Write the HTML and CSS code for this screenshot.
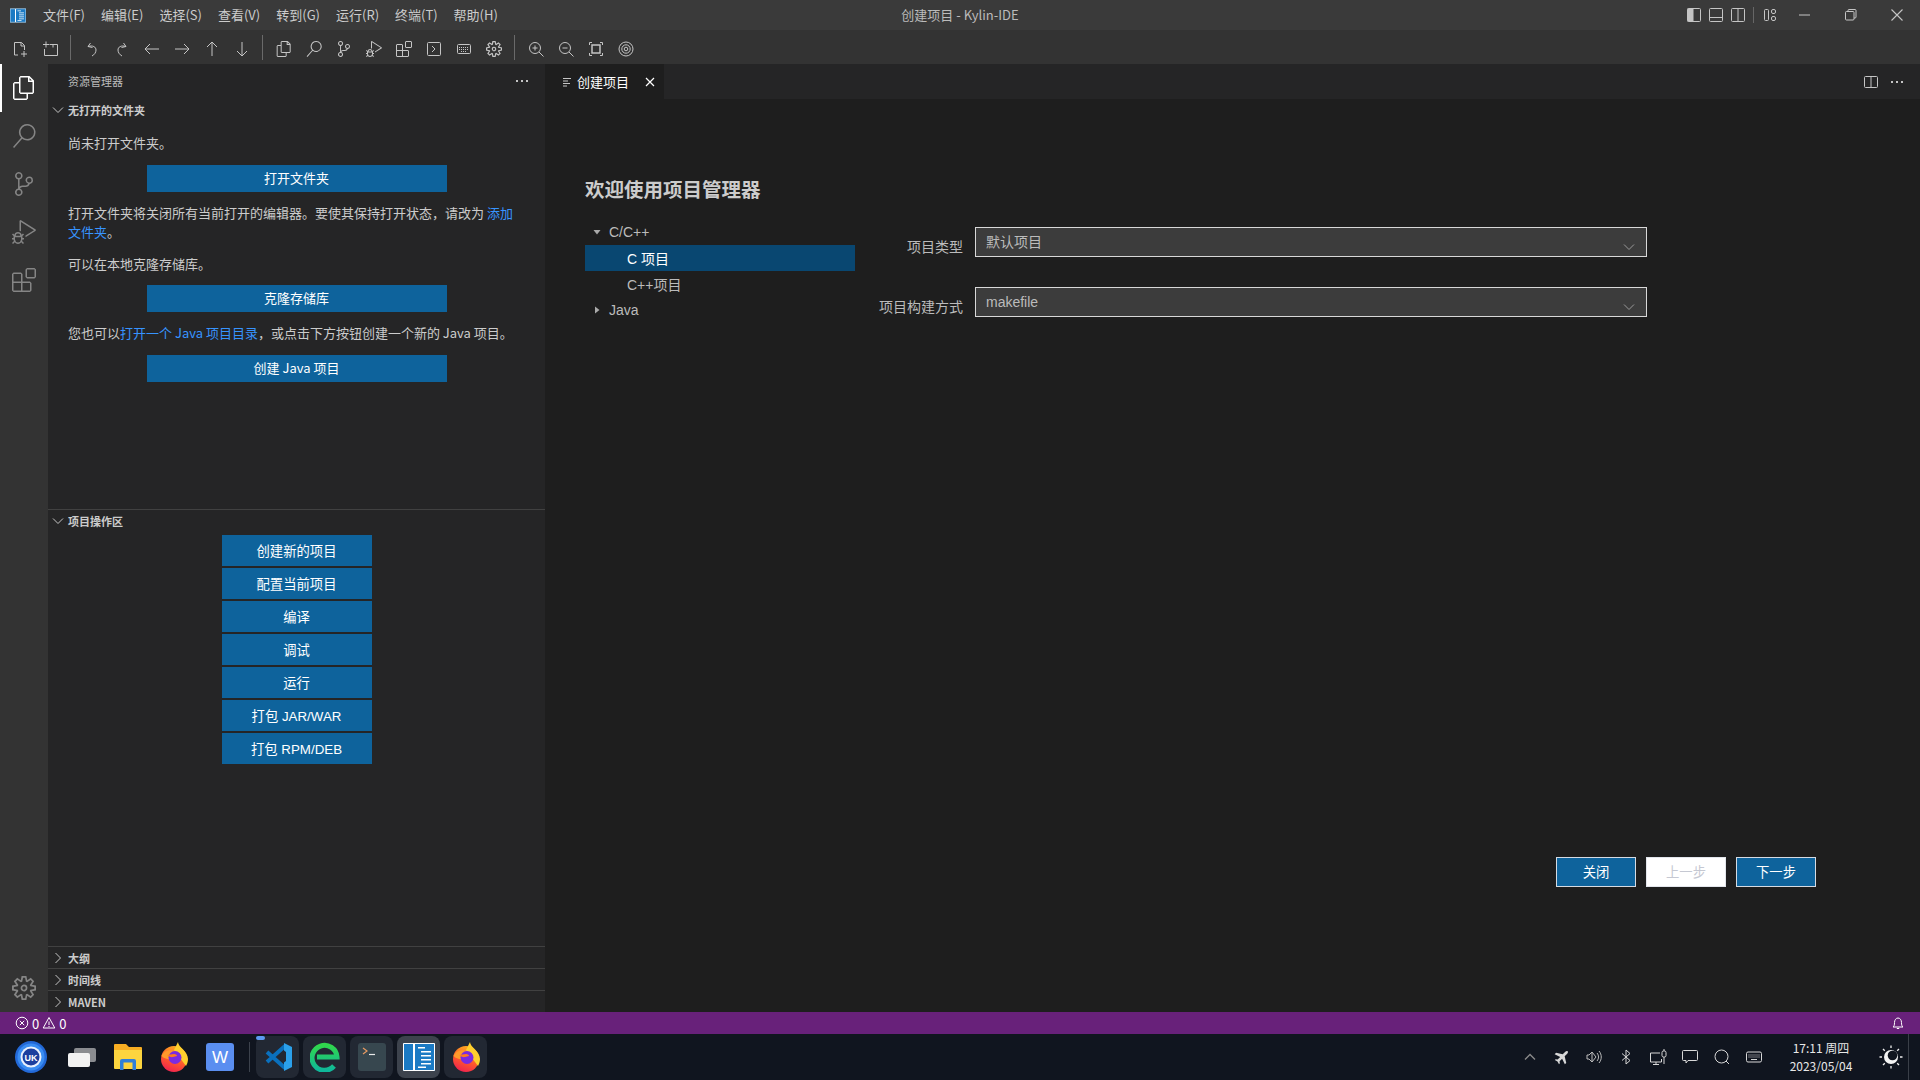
FILE: index.html
```html
<!DOCTYPE html>
<html lang="zh-CN">
<head>
<meta charset="utf-8">
<title>创建项目 - Kylin-IDE</title>
<link rel="stylesheet" href="styles.css">
</head>
<body>
<svg class="defs" aria-hidden="true">
  <defs>
    <linearGradient id="ffg" x1="0.7" y1="0" x2="0.3" y2="1"><stop offset="0" stop-color="#ffb21f"/><stop offset="0.55" stop-color="#ff5a2c"/><stop offset="1" stop-color="#f0204f"/></linearGradient>
    <symbol id="i-files" viewBox="0 0 24 24"><path fill="currentColor" fill-rule="evenodd" d="M17.5 0h-9L7 1.5V6H2.5L1 7.5v15.07L2.5 24h12.07L16 22.57V18h4.7l1.3-1.43V4.5L17.5 0zm0 2.12l2.38 2.38H17.5V2.12zm-3 20.38h-12v-15H7v9.07L8.5 18h6v4.5zm6-6h-12v-15H16V6h4.5v10.5z"/></symbol>
    <symbol id="i-search" viewBox="0 0 24 24"><path fill="currentColor" fill-rule="evenodd" d="M15.25 0a8.25 8.25 0 0 0-6.18 13.72L1 22.88l1.12 1 8.05-9.12A8.251 8.251 0 1 0 15.25.01V0zm0 15a6.75 6.75 0 1 1 0-13.5 6.75 6.75 0 0 1 0 13.5z"/></symbol>
    <symbol id="i-git" viewBox="0 0 24 24"><path fill="currentColor" fill-rule="evenodd" d="M21.007 8.222A3.738 3.738 0 0 0 15.045 5.2a3.737 3.737 0 0 0 1.156 6.583 2.988 2.988 0 0 1-2.668 1.67h-2.99a4.456 4.456 0 0 0-2.989 1.165V7.4a3.737 3.737 0 1 0-1.494 0v9.117a3.776 3.776 0 1 0 1.816.099 2.99 2.99 0 0 1 2.668-1.667h2.99a4.484 4.484 0 0 0 4.223-3.039 3.736 3.736 0 0 0 3.25-3.687zM4.565 3.738a2.242 2.242 0 1 1 4.484 0 2.242 2.242 0 0 1-4.484 0zm4.484 16.441a2.242 2.242 0 1 1-4.484 0 2.242 2.242 0 0 1 4.484 0zm8.221-9.715a2.242 2.242 0 1 1 0-4.485 2.242 2.242 0 0 1 0 4.485z"/></symbol>
    <symbol id="i-debug" viewBox="0 0 24 24"><path fill="currentColor" fill-rule="evenodd" d="M10.94 13.5l-1.32 1.32a3.73 3.73 0 0 0-7.24 0L1.06 13.5 0 14.56l1.72 1.72-.22.22V18H0v1.5h1.5v.08c.077.489.214.966.41 1.42L0 22.94 1.06 24l1.65-1.65A4.308 4.308 0 0 0 6 24a4.31 4.31 0 0 0 3.29-1.65L10.94 24 12 22.94 10.09 21c.198-.464.336-.951.41-1.45v-.1H12V18h-1.5v-1.5l-.22-.22L12 14.56l-1.06-1.06zM6 13.5a2.25 2.25 0 0 1 2.25 2.25h-4.5A2.25 2.25 0 0 1 6 13.5zm3 6a3.33 3.33 0 0 1-3 3 3.33 3.33 0 0 1-3-3v-2.25h6v2.25zm14.76-9.9v1.26L13.5 17.37V15.6l8.5-5.37L9 2v9.46a5.07 5.07 0 0 0-1.5-.72V.63L8.64 0l15.12 9.6z"/></symbol>
    <symbol id="i-ext" viewBox="0 0 24 24"><path fill="currentColor" fill-rule="evenodd" d="M13.5 1.5L15 0h7.5L24 1.5V9l-1.5 1.5H15L13.5 9V1.5zm1.5 0V9h7.5V1.5H15zM0 15V6l1.5-1.5H9L10.5 6v7.5H18l1.5 1.5v7.5L18 24H1.5L0 22.5V15zm9-1.5V6H1.5v7.5H9zM9 15H1.5v7.5H9V15zm1.5 7.5H18V15h-7.5v7.5z"/></symbol>
    <symbol id="i-gear" viewBox="0 0 24 24"><path fill="currentColor" fill-rule="evenodd" d="M19.85 8.75l4.15.83v4.84l-4.15.83 2.35 3.52-3.43 3.43-3.52-2.35-.83 4.15H9.58l-.83-4.15-3.52 2.35-3.43-3.43 2.35-3.52L0 14.42V9.58l4.15-.83L1.8 5.23 5.23 1.8l3.52 2.35L9.58 0h4.84l.83 4.15 3.52-2.35 3.43 3.43-2.35 3.52zm-1.57 5.07l4-.81v-2l-4-.81-.54-1.3 2.29-3.43-1.43-1.43-3.43 2.29-1.3-.54-.81-4h-2l-.81 4-1.3.54-3.43-2.29-1.43 1.43L6.38 8.9l-.54 1.3-4 .81v2l4 .81.54 1.3-2.29 3.43 1.43 1.43 3.43-2.29 1.3.54.81 4h2l.81-4 1.3-.54 3.43 2.29 1.43-1.43-2.29-3.43.54-1.3zm-8.186-4.672A3.43 3.43 0 0 1 12 8.57 3.44 3.44 0 0 1 15.43 12a3.43 3.43 0 1 1-5.336-2.852zm.956 4.274c.281.188.612.288.95.288A1.7 1.7 0 0 0 13.71 12a1.71 1.71 0 1 0-2.66 1.422z"/></symbol>
    <symbol id="i-chev-down" viewBox="0 0 16 16"><path fill="none" stroke="currentColor" d="M3 5.500l5 5 5-5"/></symbol>
    <symbol id="i-chev-right" viewBox="0 0 16 16"><path fill="none" stroke="currentColor" d="M5.500 3l5 5-5 5"/></symbol>
    <symbol id="i-dots" viewBox="0 0 16 16"><path fill="currentColor" d="M2 7h2v2H2zM7 7h2v2H7zM12 7h2v2h-2z"/></symbol>
    <symbol id="i-kylin" viewBox="0 0 32 28">
      <rect width="32" height="28" fill="#1b7ac4"/>
      <path fill="none" stroke="#fff" d="M.5.5h31v27H.5z"/>
      <path fill="#fff" d="M10 1h2v26h-2zM15 4h7v1.600h-7zM18 8h10v1.600H18zM18 12h10v1.600H18zM18 16h10v1.600H18zM18 20h10v1.600H18zM15 23.500h8V25h-8z"/>
    </symbol>
    <symbol id="i-firefox" viewBox="0 0 28 30">
      <circle cx="14" cy="17" r="13" fill="url(#ffg)"/>
      <path fill="#ffcf2e" d="M18 0c0 5 10 9 10 17 0 3-1 5-2 7L14 8z"/>
      <path fill="#ff9a2b" d="M1.500 14c2-6 11-8 16-3l3 4-6 2c-5 1-10 0-13-3z"/>
      <circle cx="15" cy="15.500" r="6.500" fill="#7a2be0"/>
      <path fill="#ff7a1f" d="M7 13l7-1c2 0 3 1 3 2l-4 1c-2 .5-4-.5-6-2z"/>
    </symbol>
  </defs>
</svg>

<div class="app">
  <header class="titlebar">
    <div class="menubar">
      <svg class="logo"><use href="#i-kylin"/></svg>
      <span class="menu">文件(F)</span><span class="menu">编辑(E)</span><span class="menu">选择(S)</span><span class="menu">查看(V)</span><span class="menu">转到(G)</span><span class="menu">运行(R)</span><span class="menu">终端(T)</span><span class="menu">帮助(H)</span>
    </div>
    <div class="wintitle">创建项目 - Kylin-IDE</div>
    <div class="winctrls">
      <span class="lay"><svg class="ic16" viewBox="0 0 16 16"><rect x="1.500" y="1.500" width="13" height="13" rx="1" fill="none" stroke="currentColor"/><rect x="1.500" y="1.500" width="6" height="13" fill="currentColor"/></svg></span>
      <span class="lay"><svg class="ic16" viewBox="0 0 16 16"><rect x="1.500" y="1.500" width="13" height="13" rx="1" fill="none" stroke="currentColor"/><path stroke="currentColor" d="M1.500 10.500h13"/></svg></span>
      <span class="lay"><svg class="ic16" viewBox="0 0 16 16"><rect x="1.500" y="1.500" width="13" height="13" rx="1" fill="none" stroke="currentColor"/><path stroke="currentColor" d="M8 1.500v13"/></svg></span>
      <i class="laysep"></i>
      <span class="lay"><svg class="ic16" viewBox="0 0 16 16" fill="none" stroke="currentColor"><rect x="2.500" y="2.500" width="4" height="11" rx="1"/><rect x="9.500" y="2.500" width="4" height="4" rx="1.500"/><rect x="9.500" y="9.500" width="4" height="4" rx="1.500"/></svg></span>
      <span class="ctl first"><svg class="ic12" viewBox="0 0 12 12"><path stroke="currentColor" d="M0 6h11"/></svg></span>
      <span class="ctl"><svg class="ic12" viewBox="0 0 12 12" fill="none" stroke="currentColor"><rect x=".5" y="2.500" width="8.500" height="8.500" rx="1"/><path d="M3 2.500V1.500a1 1 0 0 1 1-1h6a1 1 0 0 1 1 1V8a1 1 0 0 1-1 1H9"/></svg></span>
      <span class="ctl"><svg class="ic12" viewBox="0 0 12 12"><path stroke="currentColor" stroke-width="1.100" d="M.5.500l11 11M11.500.500l-11 11"/></svg></span>
    </div>
  </header>

  <div class="toolbar">
    <span class="tool"><svg class="ic18" viewBox="0 0 18 18" fill="none" stroke="currentColor"><path d="M7 15H3.500V2.500h7l3 3V10M10 2.500v3.500h3.500M13 11v6M10 14h6"/></svg></span>
    <span class="tool"><svg class="ic18" viewBox="0 0 18 18" fill="none" stroke="currentColor"><path d="M5 1.500v6M2 4.500h6M8.500 4.500h8v11H3.500V9M12 4.500v3"/></svg></span>
    <i class="tsep"></i>
    <span class="tool"><svg class="ic18" viewBox="0 0 18 18" fill="none" stroke="currentColor"><path d="M7.500 3L5 6.500l4.500 1M5 6.500c5-1.500 8 .5 8 3.500 0 2.500-1.500 4.500-4 6"/></svg></span>
    <span class="tool"><svg class="ic18" viewBox="0 0 18 18" fill="none" stroke="currentColor"><path d="M10.500 3L13 6.500l-4.500 1M13 6.500C8 5 5 7 5 10c0 2.500 1.500 4.500 4 6"/></svg></span>
    <span class="tool"><svg class="ic18" viewBox="0 0 18 18" fill="none" stroke="currentColor"><path d="M2 9h14M7 4L2 9l5 5"/></svg></span>
    <span class="tool"><svg class="ic18" viewBox="0 0 18 18" fill="none" stroke="currentColor"><path d="M2 9h14M11 4l5 5-5 5"/></svg></span>
    <span class="tool"><svg class="ic18" viewBox="0 0 18 18" fill="none" stroke="currentColor"><path d="M9 16V2M4 7l5-5 5 5"/></svg></span>
    <span class="tool"><svg class="ic18" viewBox="0 0 18 18" fill="none" stroke="currentColor"><path d="M9 2v14M4 11l5 5 5-5"/></svg></span>
    <i class="tsep"></i>
    <span class="tool"><svg class="ic16"><use href="#i-files"/></svg></span>
    <span class="tool"><svg class="ic16"><use href="#i-search"/></svg></span>
    <span class="tool"><svg class="ic16"><use href="#i-git"/></svg></span>
    <span class="tool"><svg class="ic16"><use href="#i-debug"/></svg></span>
    <span class="tool"><svg class="ic16"><use href="#i-ext"/></svg></span>
    <span class="tool"><svg class="ic18" viewBox="0 0 18 18" fill="none" stroke="currentColor"><rect x="2.500" y="2.500" width="13" height="13" rx="1"/><path d="M7 6l3 3-3 3"/></svg></span>
    <span class="tool"><svg class="ic18" viewBox="0 0 18 18" fill="none" stroke="currentColor"><rect x="2.500" y="4.500" width="13" height="9" rx="1"/><path stroke-dasharray="1 1" d="M4 7.500h10M4 9.500h10M6 11.500h6"/></svg></span>
    <span class="tool"><svg class="ic16"><use href="#i-gear"/></svg></span>
    <i class="tsep"></i>
    <span class="tool"><svg class="ic18" viewBox="0 0 18 18" fill="none" stroke="currentColor"><circle cx="8" cy="8" r="5.500"/><path d="M12 12l4.500 4.500M8 5.500v5M5.500 8h5"/></svg></span>
    <span class="tool"><svg class="ic18" viewBox="0 0 18 18" fill="none" stroke="currentColor"><circle cx="8" cy="8" r="5.500"/><path d="M12 12l4.500 4.500M5.500 8h5"/></svg></span>
    <span class="tool"><svg class="ic18" viewBox="0 0 18 18" fill="none" stroke="currentColor"><path d="M2.500 5V2.500H5M13 2.500h2.500V5M15.500 13v2.500H13M5 15.500H2.500V13"/><rect x="5" y="5" width="8" height="8" stroke-width="1.500"/></svg></span>
    <span class="tool"><svg class="ic18" viewBox="0 0 18 18" fill="none" stroke="currentColor"><circle cx="9" cy="9" r="7"/><circle cx="9" cy="9" r="4.200"/><circle cx="9" cy="9" r="1.800"/></svg></span>
  </div>

  <div class="main">
    <nav class="activity">
      <div class="act-top">
        <span class="act active"><svg class="ic24"><use href="#i-files"/></svg></span>
        <span class="act"><svg class="ic24"><use href="#i-search"/></svg></span>
        <span class="act"><svg class="ic24"><use href="#i-git"/></svg></span>
        <span class="act"><svg class="ic24"><use href="#i-debug"/></svg></span>
        <span class="act"><svg class="ic24"><use href="#i-ext"/></svg></span>
      </div>
      <span class="act act-gear"><svg class="ic24"><use href="#i-gear"/></svg></span>
    </nav>

    <aside class="sidebar">
      <div class="side-head"><span>资源管理器</span><svg class="ic16 more"><use href="#i-dots"/></svg></div>
      <section class="sec sec-welcome">
        <div class="sec-title"><svg class="ic16"><use href="#i-chev-down"/></svg><span>无打开的文件夹</span></div>
        <div class="welcome-body">
          <p class="msg">尚未打开文件夹。</p>
          <div class="wbtn">打开文件夹</div>
          <p class="msg">打开文件夹将关闭所有当前打开的编辑器。要使其保持打开状态，请改为 <a class="lnk">添加</a><a class="lnk">文件夹</a>。</p>
          <p class="msg">可以在本地克隆存储库。</p>
          <div class="wbtn">克隆存储库</div>
          <p class="msg">您也可以<a class="lnk">打开一个 Java 项目目录</a>，或点击下方按钮创建一个新的 Java 项目。</p>
          <div class="wbtn">创建 Java 项目</div>
        </div>
      </section>
      <section class="sec sec-actions">
        <div class="sec-title"><svg class="ic16"><use href="#i-chev-down"/></svg><span>项目操作区</span></div>
        <div class="actions">
          <div class="abtn">创建新的项目</div>
          <div class="abtn">配置当前项目</div>
          <div class="abtn">编译</div>
          <div class="abtn">调试</div>
          <div class="abtn">运行</div>
          <div class="abtn">打包 JAR/WAR</div>
          <div class="abtn">打包 RPM/DEB</div>
        </div>
      </section>
      <section class="sec sec-closed"><div class="sec-title"><svg class="ic16"><use href="#i-chev-right"/></svg><span>大纲</span></div></section>
      <section class="sec sec-closed"><div class="sec-title"><svg class="ic16"><use href="#i-chev-right"/></svg><span>时间线</span></div></section>
      <section class="sec sec-closed"><div class="sec-title"><svg class="ic16"><use href="#i-chev-right"/></svg><span>MAVEN</span></div></section>
    </aside>

    <main class="editor">
      <div class="tabs">
        <div class="tab">
          <svg class="ic12" viewBox="0 0 12 12"><path stroke="currentColor" d="M2 2.500h8M2 5h5M2 7.500h7M2 10h4"/></svg>
          <span class="tab-label">创建项目</span>
          <svg class="ic12 tab-x" viewBox="0 0 12 12"><path stroke="currentColor" stroke-width="1.200" d="M2 2l8 8M10 2l-8 8"/></svg>
        </div>
        <div class="tab-actions">
          <span class="tab-act"><svg class="ic16" viewBox="0 0 16 16" fill="none" stroke="currentColor"><rect x="1.500" y="2.500" width="13" height="11" rx="1"/><path d="M8 2.500v11"/></svg></span>
          <span class="tab-act"><svg class="ic16"><use href="#i-dots"/></svg></span>
        </div>
      </div>
      <div class="page">
        <h1 class="page-title">欢迎使用项目管理器</h1>
        <div class="panes">
          <ul class="tree">
            <li class="node"><svg class="tri" viewBox="0 0 8 8"><path fill="currentColor" d="M.5 2h7L4 6.500z"/></svg>C/C++</li>
            <li class="node child selected">C 项目</li>
            <li class="node child">C++项目</li>
            <li class="node"><svg class="tri" viewBox="0 0 8 8"><path fill="currentColor" d="M2 .5L6.500 4 2 7.500z"/></svg>Java</li>
          </ul>
          <div class="form">
            <div class="field">
              <label class="flabel">项目类型</label>
              <div class="select"><span>默认项目</span><svg class="ic16 sel-arrow"><use href="#i-chev-down"/></svg></div>
            </div>
            <div class="field">
              <label class="flabel">项目构建方式</label>
              <div class="select"><span>makefile</span><svg class="ic16 sel-arrow"><use href="#i-chev-down"/></svg></div>
            </div>
          </div>
        </div>
        <div class="footer">
          <div class="fbtn">关闭</div>
          <div class="fbtn disabled">上一步</div>
          <div class="fbtn">下一步</div>
        </div>
      </div>
    </main>
  </div>

  <footer class="status">
    <div class="st-left">
      <svg class="ic14" viewBox="0 0 14 14" fill="none" stroke="currentColor"><circle cx="7" cy="7" r="5.800"/><path d="M4.800 4.800l4.400 4.400M9.200 4.800l-4.400 4.400"/></svg><span>0</span>
      <svg class="ic14" viewBox="0 0 14 14" fill="none" stroke="currentColor"><path d="M7 1.500l5.800 10.500H1.200zM7 5.500v3.500M7 10v1"/></svg><span>0</span>
    </div>
    <svg class="ic14" viewBox="0 0 14 14" fill="none" stroke="currentColor"><path d="M2 11c1.200-1 1.500-2 1.500-4.500C3.500 4 5 2 7 2s3.500 2 3.500 4.500c0 2.500.3 3.500 1.500 4.500zM5.800 12.500h2.400"/></svg>
  </footer>

  <div class="taskbar">
    <div class="dock">
      <span class="dk dk-first"><svg class="dk-ic32" viewBox="0 0 32 32"><circle cx="16" cy="16" r="16" fill="#2369d8"/><circle cx="16" cy="16" r="13.500" fill="#3a8df2"/><circle cx="16" cy="16" r="10.500" fill="#e9f1fd"/><circle cx="16" cy="16" r="8.500" fill="#1c3f9e"/><text class="uk" x="16" y="19.500" text-anchor="middle">UK</text></svg></span>
      <span class="dk"><svg class="dk-ic28" viewBox="0 0 28 28"><rect x="6" y="5" width="22" height="14" rx="2" fill="#8a8c90"/><rect y="10" width="22" height="14" rx="2" fill="#f2f2f2"/></svg></span>
      <span class="dk"><svg class="dk-ic28" viewBox="0 0 28 28"><path fill="#f8ae23" d="M0 2a1 1 0 0 1 1-1h11l3 3h12a1 1 0 0 1 1 1v6H0z"/><path fill="#fcd53f" d="M0 7h28v18a1 1 0 0 1-1 1H1a1 1 0 0 1-1-1z"/><path fill="#2f7fd8" d="M6 27v-9a2 2 0 0 1 2-2h12a2 2 0 0 1 2 2v9h-3.500v-7.500h-9V27z"/></svg></span>
      <span class="dk"><svg class="dk-ic28 ff"><use href="#i-firefox"/></svg></span>
      <span class="dk"><svg class="dk-ic28" viewBox="0 0 28 28"><rect width="28" height="28" rx="3" fill="#5a8ef0"/><text class="wps" x="14" y="20" text-anchor="middle">W</text></svg></span>
      <i class="dk-sep"></i>
      <span class="tile"><i class="tile-dots"></i><svg class="dk-ic28 ff" viewBox="0 0 28 30"><path fill="none" stroke="#0a70bd" stroke-width="4" d="M21 4L3 20M3 10l18 16"/><path fill="#2ba0ea" d="M20 1l8 4v20l-8 4v-8.500l2-1.500V10l-2-1.500z"/></svg></span>
      <span class="tile"><svg class="dk-ic30" viewBox="0 0 30 30"><defs><linearGradient id="eg" x1="0" y1="0" x2="0" y2="1"><stop offset="0" stop-color="#30d64c"/><stop offset="1" stop-color="#0fb89a"/></linearGradient></defs><path fill="none" stroke="url(#eg)" stroke-width="5" d="M7 15h20A12.500 12.500 0 1 0 24 24"/></svg></span>
      <span class="tile"><svg class="dk-ic28" viewBox="0 0 28 28"><rect width="28" height="28" rx="3" fill="#37474f"/><path fill="none" stroke="#e79a62" stroke-width="1.200" d="M5 5l4 3-4 3"/><path stroke="#e8e8e8" stroke-width="1.200" d="M11 11.500h6"/></svg></span>
      <span class="tile tile-on"><svg class="dk-kylin"><use href="#i-kylin"/></svg></span>
      <span class="tile"><svg class="dk-ic28 ff"><use href="#i-firefox"/></svg></span>
    </div>
    <div class="tray">
      <span class="tr"><svg class="ic16 dim" viewBox="0 0 16 16" fill="none" stroke="currentColor" stroke-width="1.300"><path d="M3 10.500l5-5 5 5"/></svg></span>
      <span class="tr"><svg class="ic16" viewBox="0 0 20 20"><path fill="currentColor" transform="rotate(45 10 10)" d="M10 0c1 0 1.700 1 1.700 2.500V7l7.300 4.500V14l-7.300-2.500V16l2 1.500V19l-3.700-1-3.700 1v-1.500l2-1.500v-4.500L1 14v-2.500L8.300 7V2.500C8.300 1 9 0 10 0z"/></svg></span>
      <span class="tr"><svg class="ic-wide ic-tr" viewBox="0 0 18 18" fill="none" stroke="currentColor"><path d="M2 7v4h2l3 3V4L4 7zM7 4l4 5-4 5M12 5c2 2.500 2 5.500 0 8M14 3c3 3.500 3 8.500 0 12"/></svg></span>
      <span class="tr"><svg class="ic16" viewBox="0 0 16 16" fill="none" stroke="currentColor"><path d="M4 4.500l8 7-4 3.500V1l4 3.500-8 7"/></svg></span>
      <span class="tr"><svg class="ic-wide" viewBox="0 0 18 18" fill="none" stroke="currentColor"><path d="M11 5H1.500v9h11v-3M7 14v2.500M4 16.500h6"/><rect x="13" y="3" width="4" height="6" rx="1.500"/><path d="M15 1v2M15 9v7"/></svg></span>
      <span class="tr"><svg class="ic-wide" viewBox="0 0 18 18" fill="none" stroke="currentColor"><path d="M2.500 2.500h13a1 1 0 0 1 1 1v8a1 1 0 0 1-1 1H7l-2 2.500v-2.500H2.500a1 1 0 0 1-1-1v-8a1 1 0 0 1 1-1z"/></svg></span>
      <span class="tr"><svg class="ic16" viewBox="0 0 16 16" fill="none" stroke="currentColor"><circle cx="7.500" cy="7.500" r="6.500"/><path d="M12 12l3 3"/></svg></span>
      <span class="tr"><svg class="ic-wide" viewBox="0 0 18 18" fill="none" stroke="currentColor"><rect x="1.500" y="4" width="15" height="10" rx="1.500"/><path stroke-dasharray="1 1" d="M3.500 7h11M3.500 9h11"/><path d="M6 11.500h6"/></svg></span>
      <div class="clock"><span>17:11 周四</span><span>2023/05/04</span></div>
      <span class="sun"><svg class="ic24" viewBox="0 0 24 24" fill="none" stroke="currentColor" stroke-width="1.300"><circle cx="12" cy="12" r="7" fill="#f4f4f4" stroke="none"/><circle cx="13.500" cy="10.500" r="4.800" fill="#10151f" stroke="none"/><path d="M12 .5v2.500M12 21v2.500M.5 12H3M21 12h2.500M4 4l1.800 1.800M18.200 18.200L20 20M4 20l1.800-1.800M18.200 5.800L20 4"/></svg></span>
      <span class="show-desk"></span>
    </div>
  </div>
</div>
</body>
</html>
```

FILE: styles.css
```css
* { box-sizing: border-box; }
html, body { margin: 0; height: 100%; }
body {
  font-family: "Noto Sans CJK SC", "Noto Sans", sans-serif;
  font-size: 13px;
  color: #ccc;
  background: #1e1e1e;
  overflow: hidden;
}
.defs { width: 0; height: 0; display: block; }
svg { display: block; flex: none; }
i { font-style: normal; }
.ic12 { width: 12px; height: 12px; }
.ic14 { width: 14px; height: 14px; }
.ic16 { width: 16px; height: 16px; }
.ic18 { width: 18px; height: 18px; }
.ic24 { width: 24px; height: 24px; }

.app { display: flex; flex-direction: column; height: 1080px; }

/* title bar */
.titlebar {
  height: 30px;
  flex: none;
  background: #3a3a3a;
  display: grid;
  grid-template-columns: 1fr auto 1fr;
  align-items: center;
}
.menubar { display: flex; align-items: center; padding-left: 10px; }
.logo { width: 16px; height: 15px; margin-right: 17px; }
.menu { margin-right: 16px; color: #ccc; line-height: 30px; white-space: nowrap; }
.wintitle { color: #bbb; line-height: 30px; }
.winctrls { display: flex; justify-content: flex-end; align-items: center; color: #c5c5c5; }
.lay { width: 22px; display: flex; justify-content: center; }
.laysep { width: 1px; height: 16px; background: #666; margin: 0 5px 0 4px; }
.ctl { width: 46px; display: flex; justify-content: center; }
.ctl.first { margin-left: 1px; }

/* toolbar */
.toolbar {
  height: 34px;
  flex: none;
  background: #333;
  display: flex;
  align-items: center;
  padding-left: 5px;
  color: #c5c5c5;
}
.tool { width: 30px; display: flex; justify-content: center; padding-top: 4px; }
.tsep { width: 1px; height: 25px; background: #6a6a6a; margin: 0 6px 0 5px; }

/* main */
.main { flex: 1; display: flex; min-height: 0; }
.activity {
  width: 48px;
  flex: none;
  background: #333;
  display: flex;
  flex-direction: column;
  justify-content: space-between;
}
.act {
  height: 48px;
  display: flex;
  align-items: center;
  justify-content: center;
  color: #858585;
}
.act.active { color: #fff; border-left: 2px solid #fff; padding-right: 2px; }

/* sidebar */
.sidebar {
  width: 497px;
  flex: none;
  background: #252526;
  display: flex;
  flex-direction: column;
}
.side-head {
  height: 35px;
  flex: none;
  padding: 0 15px 2px 20px;
  display: flex;
  align-items: center;
  justify-content: space-between;
  font-size: 11px;
  color: #bbb;
}
.more { color: #c5c5c5; }
.sec-title {
  height: 22px;
  display: flex;
  align-items: center;
  gap: 2px;
  padding-left: 2px;
  font-size: 11px;
  font-weight: 700;
  color: #ccc;
}
.sec-title svg { color: #c5c5c5; }
.sec-welcome { height: 410px; flex: none; }
.welcome-body { padding: 12px 20px 0; }
.msg { margin: 0 0 13px; line-height: 19px; color: #ccc; }
.msg:first-child, .msg:last-of-type { margin-bottom: 14px; }
.lnk { color: #3794ff; }
.wbtn {
  width: 300px;
  height: 27px;
  margin: -1px auto 11px;
  padding-bottom: 2px;
  background: #0e639c;
  color: #fff;
  display: flex;
  align-items: center;
  justify-content: center;
}
.sec-actions { flex: 1; border-top: 1px solid #414141; }
.actions { display: flex; flex-direction: column; align-items: center; gap: 2px; padding-top: 3px; }
.abtn {
  width: 150px;
  height: 31px;
  padding-bottom: 1px;
  background: #0e639c;
  color: #fff;
  display: flex;
  align-items: center;
  justify-content: center;
  font-size: 13.333px;
  font-family: "Liberation Sans", "Noto Sans CJK SC", sans-serif;
}
.sec-closed { height: 22px; flex: none; border-top: 1px solid #414141; }
.sec-closed .sec-title { height: 21px; }

/* editor */
.editor { flex: 1; min-width: 0; display: flex; flex-direction: column; background: #1e1e1e; }
.tabs {
  height: 35px;
  flex: none;
  background: #252526;
  display: flex;
  justify-content: space-between;
  align-items: stretch;
}
.tab {
  width: 119px;
  background: #1e1e1e;
  display: flex;
  align-items: center;
  padding-left: 16px;
  color: #fff;
}
.tab .ic12:first-child { color: #c5c5c5; }
.tab-label { margin-left: 4px; }
.tab-x { margin-left: 15px; }
.tab-actions { display: flex; align-items: center; padding-right: 10px; color: #c5c5c5; }
.tab-act { width: 26px; display: flex; justify-content: center; }

.page {
  flex: 1;
  padding-top: 76px;
  font-family: "Liberation Sans", "Noto Sans CJK SC", sans-serif;
  display: flex;
  flex-direction: column;
}
.page-title {
  margin: 0 0 14px 40px;
  height: 30px;
  line-height: 30px;
  font-size: 19.500px;
  font-weight: 700;
  color: #ccc;
}
.panes { height: 638px; display: flex; padding-left: 40px; flex: none; }
.tree { list-style: none; margin: 0; padding: 0; width: 270px; font-size: 14px; color: #bbb; }
.node { height: 26px; display: flex; align-items: center; gap: 8px; padding-left: 8px; }
.tri { width: 8px; height: 8px; color: #aaa; }
.child { padding-left: 42px; }
.selected { background: #094771; color: #fff; }
.form { padding-top: 8px; display: flex; flex-direction: column; gap: 30px; }
.field { display: flex; }
.flabel {
  width: 108px;
  text-align: right;
  font-size: 14px;
  line-height: 20px;
  padding-top: 10px;
  color: #bbb;
  margin-right: 12px;
}
.select {
  width: 672px;
  height: 30px;
  background: #3c3c3c;
  border: 1px solid #d8d8d8;
  color: #bbb;
  font-size: 14px;
  line-height: 29px;
  padding: 0 9px 0 10px;
  display: flex;
  justify-content: space-between;
  align-items: flex-start;
}
.sel-arrow { color: #999; margin-top: 11px; }
.footer { display: flex; justify-content: flex-end; gap: 10px; padding-right: 104px; }
.fbtn {
  width: 80px;
  height: 30px;
  padding-bottom: 1px;
  font-size: 13.333px;
  background: #0e639c;
  border: 1px solid #d5dbe3;
  color: #fff;
  display: flex;
  align-items: center;
  justify-content: center;
}
.fbtn.disabled { background: #fff; color: #c5c8d2; border-color: #e3e6ec; }

/* status */
.status {
  height: 22px;
  flex: none;
  background: #68217a;
  color: #fff;
  display: flex;
  align-items: center;
  justify-content: space-between;
  padding: 0 15px;
  font-size: 13px;
}
.st-left { display: flex; align-items: center; gap: 3px; }

/* taskbar */
.taskbar {
  height: 46px;
  flex: none;
  background: #10151f;
  display: flex;
  justify-content: space-between;
  align-items: center;
}
.dock { display: flex; align-items: center; padding-left: 8px; }
.dk { width: 46px; display: flex; justify-content: center; }
.dk-first { margin-right: 5px; }
.dk-ic32 { width: 32px; height: 32px; }
.dk-ic28 { width: 28px; height: 28px; }
.dk-ic28.ff { height: 30px; }
.dk-ic30 { width: 30px; height: 30px; }
.dk-kylin { width: 32px; height: 28px; }
.uk { font: 700 9px "Liberation Sans", sans-serif; fill: #fff; }
.wps { font: 400 17px "Liberation Sans", sans-serif; fill: #fff; }
.dk-sep { width: 1px; height: 30px; background: #3c424c; margin: 0 6px 0 6px; }
.tile {
  position: relative;
  width: 43px;
  height: 42px;
  margin-right: 4px;
  border-radius: 8px;
  background: #222833;
  display: flex;
  align-items: center;
  justify-content: center;
}
.tile-on { background: #3d434d; }
.tile-dots {
  position: absolute;
  left: 0;
  top: 0;
  width: 9px;
  height: 4px;
  border-radius: 2px;
  background: #5b9bf0;
}
.tray { display: flex; align-items: center; color: #d8d8d8; }
.tr { width: 32px; display: flex; justify-content: center; }
.dim { color: #8a8a8a; }
.ic-wide { width: 18px; height: 18px; }
.ic-tr { color: #bbb; }
.clock {
  width: 72px;
  margin: 0 16px 0 15px;
  display: flex;
  flex-direction: column;
  align-items: center;
  font-size: 12px;
  line-height: 18px;
  color: #e8e8e8;
  white-space: nowrap;
}
.sun { width: 35px; display: flex; justify-content: center; color: #eee; }
.show-desk { width: 12px; height: 46px; border-left: 1px solid #3a3f48; }
```
